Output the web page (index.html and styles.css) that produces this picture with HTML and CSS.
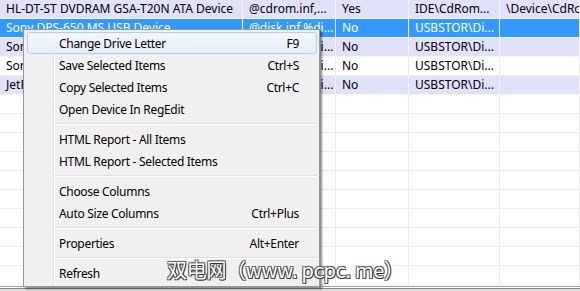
FILE: index.html
```html
<!DOCTYPE html>
<html lang="en">
<head>
  <meta charset="UTF-8" />
  <title>DriveLetterView</title>
  <link rel="stylesheet" href="styles.css">
</head>
<body>
  <div class="window">
    <div class="list">
      <div class="row alt">
        <div class="cell">HL-DT-ST DVDRAM GSA-T20N ATA Device</div>
        <div class="cell">@cdrom.inf,...</div>
        <div class="cell">Yes</div>
        <div class="cell">IDE\CdRom...</div>
        <div class="cell">\Device\CdRom0</div>
      </div>
      <div class="row selected">
        <div class="cell">Sony DPS-650 MS USB Device</div>
        <div class="cell">@disk.inf,%di...</div>
        <div class="cell">No</div>
        <div class="cell">USBSTOR\Di...</div>
        <div class="cell"></div>
      </div>
      <div class="row alt">
        <div class="cell">Sony DPS-650 SD USB Device</div>
        <div class="cell">@disk.inf,%di...</div>
        <div class="cell">No</div>
        <div class="cell">USBSTOR\Di...</div>
        <div class="cell"></div>
      </div>
      <div class="row">
        <div class="cell">Sony DPS-650 CF USB Device</div>
        <div class="cell">@disk.inf,%di...</div>
        <div class="cell">No</div>
        <div class="cell">USBSTOR\Di...</div>
        <div class="cell"></div>
      </div>
      <div class="row alt">
        <div class="cell">JetFlash Transcend 8GB USB Device</div>
        <div class="cell">@disk.inf,%di...</div>
        <div class="cell">No</div>
        <div class="cell">USBSTOR\Di...</div>
        <div class="cell"></div>
      </div>
      <div class="row"><div class="cell"></div><div class="cell"></div><div class="cell"></div><div class="cell"></div><div class="cell"></div></div>
      <div class="row"><div class="cell"></div><div class="cell"></div><div class="cell"></div><div class="cell"></div><div class="cell"></div></div>
      <div class="row"><div class="cell"></div><div class="cell"></div><div class="cell"></div><div class="cell"></div><div class="cell"></div></div>
      <div class="row"><div class="cell"></div><div class="cell"></div><div class="cell"></div><div class="cell"></div><div class="cell"></div></div>
      <div class="row"><div class="cell"></div><div class="cell"></div><div class="cell"></div><div class="cell"></div><div class="cell"></div></div>
      <div class="row"><div class="cell"></div><div class="cell"></div><div class="cell"></div><div class="cell"></div><div class="cell"></div></div>
      <div class="row"><div class="cell"></div><div class="cell"></div><div class="cell"></div><div class="cell"></div><div class="cell"></div></div>
      <div class="row"><div class="cell"></div><div class="cell"></div><div class="cell"></div><div class="cell"></div><div class="cell"></div></div>
      <div class="row"><div class="cell"></div><div class="cell"></div><div class="cell"></div><div class="cell"></div><div class="cell"></div></div>
      <div class="row"><div class="cell"></div><div class="cell"></div><div class="cell"></div><div class="cell"></div><div class="cell"></div></div>
    </div>
    <div class="frame-bottom"></div>

    <!-- context menu -->
    <div class="menu">
      <div class="item hover"><span>Change Drive Letter</span><span class="key">F9</span></div>
      <div class="item"><span>Save Selected Items</span><span class="key">Ctrl+S</span></div>
      <div class="item"><span>Copy Selected Items</span><span class="key">Ctrl+C</span></div>
      <div class="item"><span>Open Device In RegEdit</span></div>
      <div class="sep"></div>
      <div class="item"><span>HTML Report - All Items</span></div>
      <div class="item"><span>HTML Report - Selected Items</span></div>
      <div class="sep"></div>
      <div class="item"><span>Choose Columns</span></div>
      <div class="item"><span>Auto Size Columns</span><span class="key">Ctrl+Plus</span></div>
      <div class="sep"></div>
      <div class="item"><span>Properties</span><span class="key">Alt+Enter</span></div>
      <div class="sep"></div>
      <div class="item"><span>Refresh</span></div>
    </div>

    <div class="watermark">双电网（www. pcpc. me）</div>
  </div>
</body>
</html>
```

FILE: styles.css
```css
:root {
  --row-alt: #e1e1fa;
  --select: #3399ff;
  --grid: #ededed;
  --menu-bg: #f0f0f0;
  --menu-border: #979797;
  --text: #000;
}

body {
  margin: 0;
  background: #fff;
  color: var(--text);
  font-family: 'Noto Sans', 'Segoe UI', sans-serif;
  font-size: 12px;
  overflow: hidden;
}

.window {
  position: relative;
  width: 580px;
  height: 291px;
  overflow: hidden;
}

.list {
  height: 286px;
  overflow: hidden;
}

.row {
  display: grid;
  grid-template-columns: 243px 93px 73px 91px 1fr;
  height: 19px;
}

.cell {
  box-sizing: border-box;
  border-right: 1px solid var(--grid);
  border-bottom: 1px solid var(--grid);
  padding: 0 6px;
  line-height: 18px;
  white-space: nowrap;
  overflow: hidden;
}

.row.alt {
  background: var(--row-alt);
}

.row.alt .cell,
.row.selected .cell {
  border-color: #f4f4fc;
}

.row.selected {
  background: var(--select);
  color: #fff;
}

.frame-bottom {
  height: 5px;
  border-top: 1px solid #a0a0a0;
  box-sizing: border-box;
  background: linear-gradient(#fff 0, #fff 1px, #8a8a8a 1px, #8a8a8a 2px, #dcdcdc 2px);
}

/* context menu */
.menu {
  position: absolute;
  left: 23px;
  top: 29px;
  width: 297px;
  box-sizing: border-box;
  padding: 2px 2px;
  background: var(--menu-bg);
  border: 1px solid var(--menu-border);
  box-shadow: 2px 2px 2px rgba(0, 0, 0, 0.45);
  letter-spacing: -0.3px;
}

.menu::before {
  content: '';
  position: absolute;
  top: 0;
  bottom: 0;
  left: 29px;
  width: 1px;
  background: #e2e3e3;
  border-right: 1px solid #fff;
}

.item {
  position: relative;
  display: flex;
  justify-content: space-between;
  align-items: center;
  height: 22px;
  box-sizing: border-box;
  padding: 0 17px 0 32px;
  border: 1px solid transparent;
  border-radius: 3px;
}

.item.hover {
  margin-left: 1px;
  padding-left: 31px;
  border-color: #aecff7;
  background: linear-gradient(#f2f7fd, #e5eefa);
}

.sep {
  position: relative;
  height: 8px;
  margin-left: 29px;
}

.sep::after {
  content: '';
  position: absolute;
  left: 0;
  right: 0;
  top: 3px;
  height: 1px;
  background: #e0e0e0;
  border-bottom: 1px solid #fff;
}

.watermark {
  position: absolute;
  left: 167px;
  top: 255px;
  font-family: 'Noto Sans CJK SC', sans-serif;
  font-size: 20px;
  letter-spacing: -0.3px;
  color: #fff;
  white-space: nowrap;
  text-shadow: 1px 1px 0 #333, -1px -1px 0 #666, 1px -1px 0 #555, -1px 1px 0 #555;
}
```
